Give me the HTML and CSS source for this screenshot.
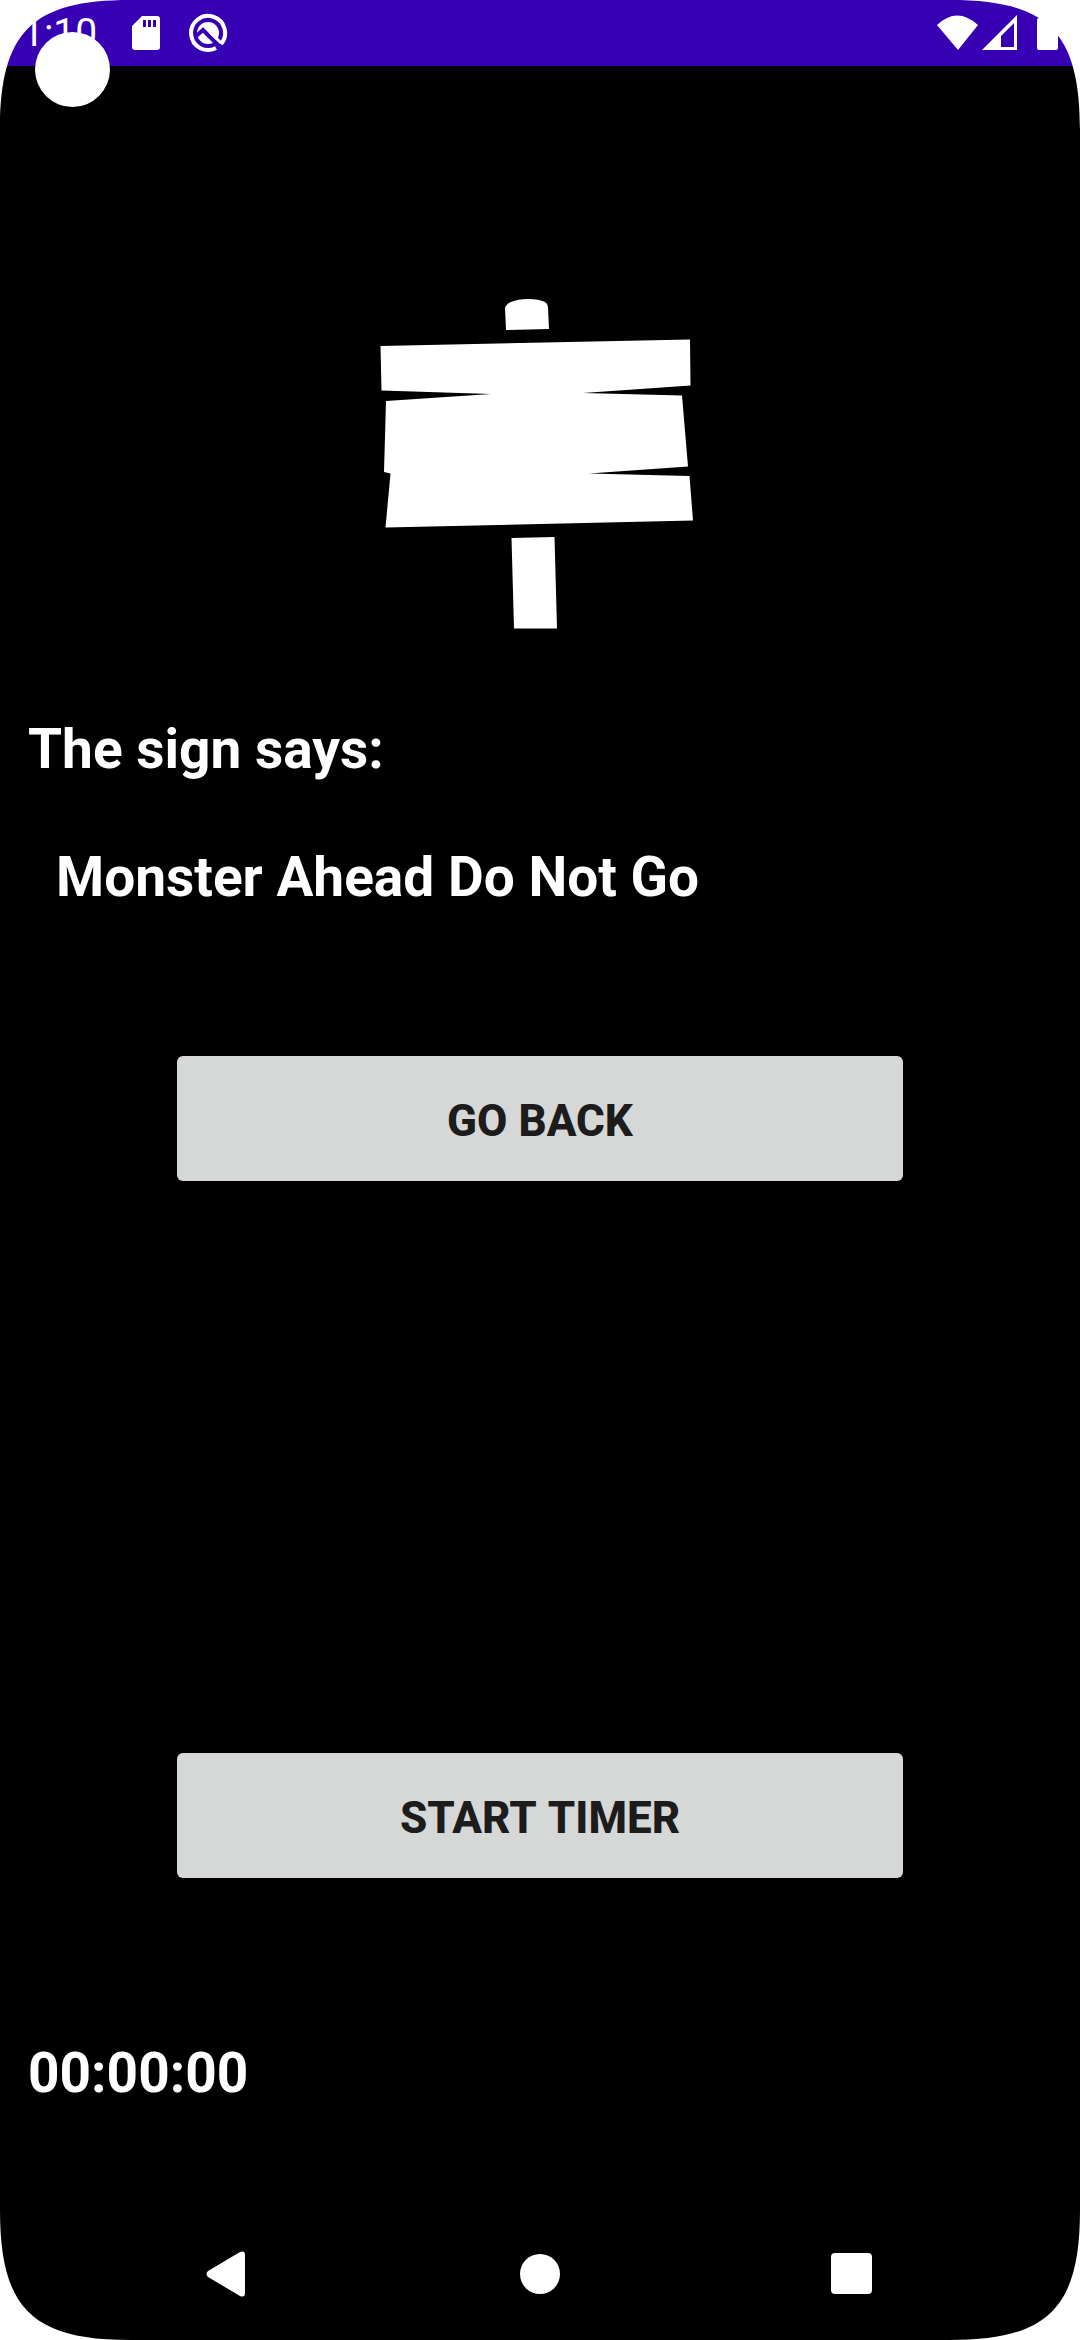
FILE: index.html
```html
<!DOCTYPE html>
<html lang="en">
<head>
<meta charset="utf-8">
<meta name="viewport" content="width=device-width, initial-scale=1">
<title>Sign</title>
<link rel="stylesheet" href="styles.css">
</head>
<body>
<div class="screen">
  <header class="status">
    <div class="status-group">
      <span class="clock">1:10</span>
      <svg class="sd" width="28" height="34" viewBox="0 0 28 34" aria-hidden="true"><path fill="#fff" fill-rule="evenodd" d="M10 0H25Q28 0 28 3V31Q28 34 25 34H3Q0 34 0 31V10ZM11 4V11H14V4ZM16 4V11H19V4ZM21 4V11H24V4Z"/></svg>
      <svg width="40" height="40" viewBox="0 0 40 40" aria-hidden="true">
        <path fill="none" stroke="#fff" stroke-width="4" d="M33 31A17 17 0 1 0 28 35"/>
        <circle cx="20" cy="20" r="11" fill="#fff"/>
        <path fill="none" stroke="#3700b3" stroke-width="4" d="M7 24L15 17L32 34"/>
        <path fill="none" stroke="#fff" stroke-width="3" d="M22 19L33 30"/>
        <path fill="none" stroke="#3700b3" stroke-width="3" d="M20 22L31 33"/>
      </svg>
    </div>
    <div class="status-group status-right">
      <svg width="42" height="36" viewBox="0 0 42 36" aria-hidden="true"><path fill="#fff" d="M0 10Q20 -9 41 10L21 35Z"/></svg>
      <svg width="36" height="36" viewBox="0 0 36 36" aria-hidden="true"><path fill="#fff" fill-rule="evenodd" d="M35 0V35H0ZM32 8L19 21V32H32Z"/></svg>
      <svg class="battery" width="22" height="34" viewBox="0 0 22 34" aria-hidden="true"><path fill="#fff" d="M2 2H5V0H16V2H19Q21 2 21 4V32Q21 34 19 34H2Q0 34 0 32V4Q0 2 2 2Z"/></svg>
    </div>
  </header>

  <main class="content">
    <svg class="sign" width="320" height="332" viewBox="380 298 320 332" role="img" aria-label="Wooden sign">
      <g fill="#fff">
        <path d="M506 330L505 308Q506 304 511 302Q518 299 528 299Q539 299 545 302Q548 304 548 308L549 329Z"/>
        <path d="M380.500 346L690 339.500L690.500 385.500L583 393L682 395.500L688 466.500L589 473.500L689.500 476L693 520.500L385.500 527.500L390.500 473.500L384 472L386 401L491 394L381.500 390.500Z"/>
        <path d="M511.500 538L554.500 537L557 628.500H514Z"/>
      </g>
    </svg>
    <p class="line">The sign says:</p>
    <p class="line message">Monster Ahead Do Not Go</p>
    <button class="action" type="button"><span>GO</span> <span>BACK</span></button>
    <button class="action start" type="button"><span>START</span> <span>TIMER</span></button>
    <p class="line timer">00:00:00</p>
  </main>

  <nav class="nav" aria-label="System">
    <button class="nav-key" type="button" aria-label="Back"><svg width="44" height="46" viewBox="0 0 44 46"><path fill="#fff" d="M34 1Q39 -1 39 4V42Q39 47 34 45L2 26Q-1 23 2 20Z"/></svg></button>
    <button class="nav-key" type="button" aria-label="Home"><svg width="42" height="42" viewBox="0 0 42 42"><circle cx="21" cy="21" r="20" fill="#fff"/></svg></button>
    <button class="nav-key" type="button" aria-label="Overview"><svg width="42" height="42" viewBox="0 0 42 42"><rect width="41" height="41" rx="4" fill="#fff"/></svg></button>
  </nav>

  <span class="camera"></span>
  <svg class="corner top left" viewBox="0 0 130 130" aria-hidden="true"><path fill="#fff" d="M0 0H130C32 0 0 32 0 130Z"/></svg>
  <svg class="corner top right" viewBox="0 0 130 130" aria-hidden="true"><path fill="#fff" d="M130 0V130C130 32 98 0 0 0Z"/></svg>
  <svg class="corner bottom left" viewBox="0 0 130 130" aria-hidden="true"><path fill="#fff" d="M0 130V0C0 98 32 130 130 130Z"/></svg>
  <svg class="corner bottom right" viewBox="0 0 130 130" aria-hidden="true"><path fill="#fff" d="M130 130H0C98 130 130 98 130 0Z"/></svg>
</div>
</body>
</html>
```
FILE: styles.css
```css
* {
  box-sizing: border-box;
}

body {
  margin: 0;
  background: #000;
  color: #fff;
  font-family: Roboto, "Liberation Sans", sans-serif;
}

svg {
  display: block;
}

.screen {
  position: relative;
  display: flex;
  flex-direction: column;
  min-height: 100vh;
  overflow: hidden;
}

.status {
  display: flex;
  justify-content: space-between;
  align-items: center;
  height: 66px;
  padding: 0 21px 0 22px;
  background: #3700b3;
}

.status-group {
  display: flex;
  align-items: center;
}

.clock {
  font-size: 39px;
  line-height: 46px;
}

.sd {
  margin: 0 28px 0 35px;
}

.status-right {
  gap: 3px;
}

.battery {
  margin-left: 16px;
}

.content {
  flex: 1;
  display: flex;
  flex-direction: column;
  padding: 232px 28px 0;
}

.sign {
  align-self: center;
  margin-bottom: 87px;
}

.line {
  margin: 0;
  font-size: 55px;
  font-weight: 700;
  line-height: 64px;
}

.message {
  margin-top: 64px;
  padding-left: 28px;
}

.action {
  display: flex;
  justify-content: center;
  align-items: center;
  gap: 11px;
  align-self: center;
  width: 726px;
  max-width: 100%;
  height: 125px;
  margin-top: 147px;
  padding: 4px 0 0;
  border: 0;
  border-radius: 6px;
  background: #d6d8d7;
  color: #1c1c1c;
  font-family: inherit;
  font-size: 44px;
  font-weight: 800;
}

.start {
  margin-top: 572px;
}

.timer {
  margin-top: 163px;
}

.nav {
  display: flex;
  justify-content: center;
  gap: 180px;
  height: 132px;
}

.nav-key {
  display: flex;
  justify-content: center;
  align-items: center;
  width: 132px;
  padding: 0;
  border: 0;
  background: none;
}

.camera {
  position: absolute;
  top: 32px;
  left: 35px;
  width: 75px;
  height: 75px;
  border-radius: 50%;
  background: #fff;
}

.corner {
  position: absolute;
  width: 130px;
  height: 130px;
}

.top {
  top: 0;
}

.bottom {
  bottom: 0;
}

.left {
  left: 0;
}

.right {
  right: 0;
}
```
